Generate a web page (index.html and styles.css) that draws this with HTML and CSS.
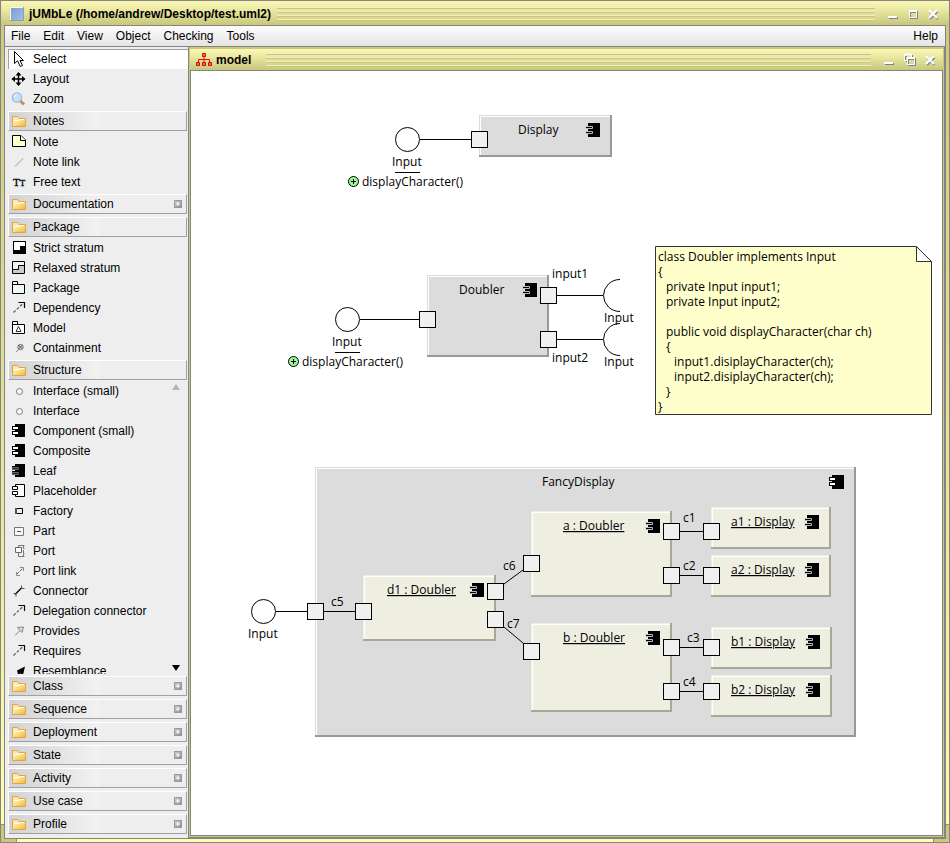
FILE: index.html
```html
<!DOCTYPE html>
<html lang="en">
<head>
<meta charset="utf-8">
<title>jUMbLe</title>
<link rel="stylesheet" href="styles.css">
</head>
<body>
<svg class="sprite" aria-hidden="true">
  <defs>
    <linearGradient id="g-folder" x1="0" y1="0" x2="1" y2="1"><stop offset="0" stop-color="#fff6c4"/><stop offset="1" stop-color="#f3bd2e"/></linearGradient>
    <linearGradient id="g-app" x1="0" y1="0" x2="1" y2="1"><stop offset="0" stop-color="#7a9bd4"/><stop offset="1" stop-color="#a4bee8"/></linearGradient>
    <linearGradient id="g-plus" x1="0" y1="0" x2="1" y2="1"><stop offset="0" stop-color="#d4d4d4"/><stop offset="1" stop-color="#8a8a8a"/></linearGradient>
  </defs>
  <symbol id="i-cursor" viewBox="0 0 16 16"><path d="M3.5 .5V12.5L6.5 9.8L9.3 15.5L11.5 14.5L9 9.5H12.5Z" fill="#fff" stroke="#000"/></symbol>
  <symbol id="i-move" viewBox="0 0 16 16"><path d="M7.5 2V14M1.500 8H13.500" stroke="#000" stroke-width="1.500"/><path d="M7.500 1L10.500 4.500H4.500ZM7.500 15L4.500 11.500H10.500ZM.5 8L4 5V11ZM14.500 8L11 5V11Z"/></symbol>
  <symbol id="i-zoom" viewBox="0 0 16 16"><path d="M9 9.500L13 13.500" stroke="#c98f52" stroke-width="3"/><circle cx="6" cy="6.500" r="4.600" fill="#c6e0fa" stroke="#9dbbe4" stroke-width="1.400"/><path d="M3.500 6A3 3 0 0 1 6 3.500" stroke="#fff" fill="none"/></symbol>
  <symbol id="i-folder" viewBox="0 0 16 16"><path d="M1.500 13.500V3.500H6.500L8 5.500H14.500V13.500Z" fill="#ffe9a6" stroke="#e0a24a"/><path d="M3 13V8H8L9.500 6.500H14V13Z" fill="url(#g-folder)"/><path d="M3 7.500H8L9.500 6.500H13" stroke="#fff" fill="none"/></symbol>
  <symbol id="i-note" viewBox="0 0 16 16"><path d="M1.500 1.500H10L14.500 6V12.500H1.500Z" fill="#ffffcc" stroke="#000"/><path d="M9.500 1.500V6.500H14.500" fill="#fff" stroke="#000"/></symbol>
  <symbol id="i-notelink" viewBox="0 0 16 16"><path d="M4 12.500L12 4.500" stroke="#999"/></symbol>
  <symbol id="i-strict" viewBox="0 0 16 16"><path d="M2 1H15V14H2Z"/><path d="M3 2H14V6H9V10H3Z" fill="#fff"/></symbol>
  <symbol id="i-relaxed" viewBox="0 0 16 16"><path d="M1.500 1.500H13.500V13.500H1.500Z" fill="#f4f4f4" stroke="#000"/><path d="M2 9.500H7.500V5.500H13V13H2Z" fill="#ccc"/><path d="M2 9.500H7.500V5.500H13" fill="none" stroke="#000"/></symbol>
  <symbol id="i-package" viewBox="0 0 16 16"><path d="M1.500 4.500H13.500V13.500H1.500ZM1.500 1.500H6.500V4.500H1.500Z" fill="#eef8ff" stroke="#000"/></symbol>
  <symbol id="i-model" viewBox="0 0 16 16"><path d="M1.500 4.500H13.500V13.500H1.500ZM1.500 1.500H6.500V4.500H1.500Z" fill="#fff" stroke="#000"/><path d="M5 11.500L7.500 6.500L10 11.500Z" fill="none" stroke="#333"/></symbol>
  <symbol id="i-dependency" viewBox="0 0 16 16"><path d="M2.500 12.500L12 3.500" stroke="#555" stroke-width="1.200" stroke-dasharray="3 1.500"/><path d="M7.500 2.500H13.500V8" fill="none" stroke="#000" stroke-width="1.200"/></symbol>
  <symbol id="i-containment" viewBox="0 0 16 16"><path d="M5 12L8 9" stroke="#888"/><circle cx="9.500" cy="7" r="2.700" fill="#ddd" stroke="#777"/><path d="M7.500 5L11.500 9M11.500 5L7.500 9" stroke="#555"/></symbol>
  <symbol id="i-circle" viewBox="0 0 16 16"><circle cx="8.500" cy="8.500" r="3" fill="#fafafa" stroke="#777"/></symbol>
  <symbol id="i-component" viewBox="0 0 16 16"><path d="M4 1H14V14H4V12H1V8H4V7H1V3H4Z"/><path d="M2 4H7V6H2ZM2 9H7V11H2Z" fill="#fff"/></symbol>
  <symbol id="i-leaf" viewBox="0 0 16 16"><path d="M4 1H14V14H4V12H1V8H4V7H1V3H4Z"/><path d="M1.500 4.500H7.500V6.500H1.500ZM1.500 9.500H7.500V11.500H1.500Z" fill="#222" stroke="#666"/></symbol>
  <symbol id="i-placeholder" viewBox="0 0 16 16"><path d="M4.500 4V1.500H13.500V13.500H4.500V11" fill="#fff" stroke="#000"/><path d="M4.500 4V11" stroke="#fff"/><path d="M1.500 3.500H6.500V6.500H1.500ZM1.500 8.500H6.500V11.500H1.500Z" fill="#fff" stroke="#000"/></symbol>
  <symbol id="i-factory" viewBox="0 0 16 16"><path d="M5 5.500H11.500V10.500H5Z" fill="#eee" stroke="#000"/><path d="M5 5V11" stroke="#555" stroke-width="2"/></symbol>
  <symbol id="i-part" viewBox="0 0 16 16"><path d="M3.500 4.500H12.500V12.500H3.500Z" fill="#f8f8f8" stroke="#777"/><path d="M6 8.500H10" stroke="#555"/></symbol>
  <symbol id="i-port" viewBox="0 0 16 16"><path d="M7.500 4.500V2.500H13.500M12.500 3V5.500H13.500M12.500 7V10M7.500 10V13.500H13.500M12.500 13V10.500H13.500" fill="none" stroke="#777"/><path d="M4.500 4.500H10.500V9.500H4.500Z" fill="#fff" stroke="#666"/></symbol>
  <symbol id="i-portlink" viewBox="0 0 16 16"><path d="M5 12L12 5" stroke="#666" stroke-dasharray="4 1"/><path d="M9 4.500H12.500V8M5.500 9V12.500H9" fill="none" stroke="#888"/></symbol>
  <symbol id="i-connector" viewBox="0 0 16 16"><path d="M4 11.500L11 4.500" stroke="#000" stroke-width="1.200"/><path d="M10.500 2.500V5.500H13.500M2.500 10.500H5V13.500" fill="none" stroke="#555"/></symbol>
  <symbol id="i-provides" viewBox="0 0 16 16"><path d="M4 12.500L9 7.500" stroke="#888"/><path d="M6.500 4.500L12.500 4L11 9.500L9 7.500Z" fill="#ddd" stroke="#888"/></symbol>
  <symbol id="i-resemblance" viewBox="0 0 16 16"><path d="M5 14L9 9" stroke="#000" stroke-width="1.500"/><path d="M14 3.500L12 12L9.500 10.500L7 11L6 7.500Z"/></symbol>
  <symbol id="i-plus" viewBox="0 0 8 8"><rect x=".5" y=".5" width="7" height="7" fill="url(#g-plus)" stroke="#999"/><path d="M4 2V6M2 4H6" stroke="#fff"/></symbol>
  <symbol id="w-min" viewBox="0 0 12 12"><path d="M2 9H11V11H2Z" fill="#75809a"/><path d="M1 8H10V10H1Z" fill="#fff"/></symbol>
  <symbol id="w-max" viewBox="0 0 12 12"><path d="M3 10.500H10.500V3" fill="none" stroke="#75809a"/><path d="M2 3H9.500M2.500 3V9.500H9.500V2" fill="none" stroke="#fff"/><path d="M2 2H10V4H2Z" fill="#fff"/><path d="M3.500 9V4.500H9" fill="none" stroke="#75809a"/></symbol>
  <symbol id="w-restore" viewBox="0 0 13 13"><path d="M2.500 8V3.500H4M3 8.500H4M9.500 2V4" fill="none" stroke="#75809a"/><path d="M1.500 8V.5M1 1H9M1 7.500H4M8.500 1V4" fill="none" stroke="#fff"/><path d="M1 1H9V2H1Z" fill="#fff"/><path d="M5 12.500H12.500V5M5.500 11V6.500H11" fill="none" stroke="#75809a"/><path d="M4.500 5V11.500H11.500V5" fill="none" stroke="#fff"/><path d="M4 4H12V6H4Z" fill="#fff"/></symbol>
  <symbol id="w-close" viewBox="0 0 12 12"><path d="M3 3.500L10.500 11M10.500 3.500L3 11" stroke="#75809a" stroke-width="2"/><path d="M2 2L10 10M10 2L2 10" stroke="#fff" stroke-width="2.200"/></symbol>
  <symbol id="c-leaf" viewBox="0 0 15 14"><path d="M3 0H15V14H3Z"/><path d="M.5 3.500H7.500V5.500H.5M.5 8.500H7.500V10.500H.5" fill="none" stroke="#bbb"/><path d="M1 4H6V5H1ZM1 9H6V10H1Z"/></symbol>
  <symbol id="c-comp" viewBox="0 0 15 14"><path d="M3 0H15V14H3V11H0V7H3V6H0V2H3Z"/><path d="M1 3H6V5H1ZM1 8H6V10H1Z" fill="#fff"/></symbol>
</svg>

<div class="window">
  <header class="titlebar">
    <svg class="app-icon" viewBox="0 0 14 14" aria-hidden="true"><rect x=".5" y=".5" width="13" height="13" fill="url(#g-app)" stroke="#f4f6fa"/><path d="M0 13.500H13.500V0" fill="none" stroke="#8c9cbc"/></svg>
    <h1 class="title">jUMbLe (/home/andrew/Desktop/test.uml2)</h1>
    <span class="bumps"></span>
    <div class="win-buttons">
      <button aria-label="Minimize"><svg><use href="#w-min"/></svg></button>
      <button aria-label="Maximize"><svg><use href="#w-max"/></svg></button>
      <button aria-label="Close"><svg><use href="#w-close"/></svg></button>
    </div>
  </header>

  <div class="frame">
    <nav class="menubar">
      <button>File</button><button>Edit</button><button>View</button><button>Object</button><button>Checking</button><button>Tools</button><button class="help">Help</button>
    </nav>

    <div class="work">
      <aside class="palette">
        <ul class="tools">
          <li><button class="tool selected"><svg><use href="#i-cursor"/></svg>Select</button></li>
          <li><button class="tool"><svg><use href="#i-move"/></svg>Layout</button></li>
          <li><button class="tool"><svg><use href="#i-zoom"/></svg>Zoom</button></li>
        </ul>
        <button class="group"><svg><use href="#i-folder"/></svg>Notes</button>
        <ul class="tools">
          <li><button class="tool"><svg><use href="#i-note"/></svg>Note</button></li>
          <li><button class="tool"><svg><use href="#i-notelink"/></svg>Note link</button></li>
          <li><button class="tool"><span class="tt" aria-hidden="true">T<small>T</small></span>Free text</button></li>
        </ul>
        <button class="group"><svg><use href="#i-folder"/></svg>Documentation<svg class="plus"><use href="#i-plus"/></svg></button>
        <button class="group"><svg><use href="#i-folder"/></svg>Package</button>
        <ul class="tools">
          <li><button class="tool"><svg><use href="#i-strict"/></svg>Strict stratum</button></li>
          <li><button class="tool"><svg><use href="#i-relaxed"/></svg>Relaxed stratum</button></li>
          <li><button class="tool"><svg><use href="#i-package"/></svg>Package</button></li>
          <li><button class="tool"><svg><use href="#i-dependency"/></svg>Dependency</button></li>
          <li><button class="tool"><svg><use href="#i-model"/></svg>Model</button></li>
          <li><button class="tool"><svg><use href="#i-containment"/></svg>Containment</button></li>
        </ul>
        <button class="group"><svg><use href="#i-folder"/></svg>Structure</button>
        <div class="scroller">
          <ul class="tools">
            <li><button class="tool"><svg><use href="#i-circle"/></svg>Interface (small)</button></li>
            <li><button class="tool"><svg><use href="#i-circle"/></svg>Interface</button></li>
            <li><button class="tool"><svg><use href="#i-component"/></svg>Component (small)</button></li>
            <li><button class="tool"><svg><use href="#i-component"/></svg>Composite</button></li>
            <li><button class="tool"><svg><use href="#i-leaf"/></svg>Leaf</button></li>
            <li><button class="tool"><svg><use href="#i-placeholder"/></svg>Placeholder</button></li>
            <li><button class="tool"><svg><use href="#i-factory"/></svg>Factory</button></li>
            <li><button class="tool"><svg><use href="#i-part"/></svg>Part</button></li>
            <li><button class="tool"><svg><use href="#i-port"/></svg>Port</button></li>
            <li><button class="tool"><svg><use href="#i-portlink"/></svg>Port link</button></li>
            <li><button class="tool"><svg><use href="#i-connector"/></svg>Connector</button></li>
            <li><button class="tool"><svg><use href="#i-dependency"/></svg>Delegation connector</button></li>
            <li><button class="tool"><svg><use href="#i-provides"/></svg>Provides</button></li>
            <li><button class="tool"><svg><use href="#i-dependency"/></svg>Requires</button></li>
            <li><button class="tool"><svg><use href="#i-resemblance"/></svg>Resemblance</button></li>
          </ul>
          <button class="scroll up" aria-label="Scroll up"></button>
          <button class="scroll down" aria-label="Scroll down"></button>
        </div>
        <button class="group"><svg><use href="#i-folder"/></svg>Class<svg class="plus"><use href="#i-plus"/></svg></button>
        <button class="group"><svg><use href="#i-folder"/></svg>Sequence<svg class="plus"><use href="#i-plus"/></svg></button>
        <button class="group"><svg><use href="#i-folder"/></svg>Deployment<svg class="plus"><use href="#i-plus"/></svg></button>
        <button class="group"><svg><use href="#i-folder"/></svg>State<svg class="plus"><use href="#i-plus"/></svg></button>
        <button class="group"><svg><use href="#i-folder"/></svg>Activity<svg class="plus"><use href="#i-plus"/></svg></button>
        <button class="group"><svg><use href="#i-folder"/></svg>Use case<svg class="plus"><use href="#i-plus"/></svg></button>
        <button class="group"><svg><use href="#i-folder"/></svg>Profile<svg class="plus"><use href="#i-plus"/></svg></button>
      </aside>

      <section class="doc">
        <header class="doc-title">
          <svg class="doc-icon" viewBox="0 0 16 13" aria-hidden="true"><path d="M8 4V9M2.500 9V6.500H13.500V9" fill="none" stroke="#e01010"/><path d="M6.500 .5H9.500V3.500H6.500ZM.5 9.500H3.500V12.500H.5ZM6.500 9.500H9.500V12.500H6.500ZM12.500 9.500H15.500V12.500H12.500Z" fill="#b08a60" stroke="#f00000"/></svg>
          <h2 class="title">model</h2>
          <span class="bumps"></span>
          <div class="win-buttons">
            <button aria-label="Minimize diagram"><svg><use href="#w-min"/></svg></button>
            <button aria-label="Restore diagram"><svg class="restore"><use href="#w-restore"/></svg></button>
            <button aria-label="Close diagram"><svg><use href="#w-close"/></svg></button>
          </div>
        </header>
        <main class="canvas">
          <svg class="diagram" viewBox="191 71 751 764" width="751" height="764">
            <g class="node">
              <rect x="479" y="115" width="133" height="42"/><path class="hi" d="M480.500 155V116.500H610"/><path class="shade" d="M479 156H611V115"/>
              <rect x="427" y="275" width="122" height="82"/><path class="hi" d="M428.500 355V276.500H547"/><path class="shade" d="M427 356H548V275"/>
              <rect x="315" y="467" width="541" height="270"/><path class="hi" d="M316.500 735V468.500H854"/><path class="shade" d="M315 736H855V467"/>
            </g>
            <g class="node part">
              <rect x="363" y="575" width="133" height="66"/><path class="hi" d="M364.500 639V576.500H494"/><path class="shade" d="M363 640H495V575"/>
              <rect x="531" y="511" width="141" height="86"/><path class="hi" d="M532.500 595V512.500H670"/><path class="shade" d="M531 596H671V511"/>
              <rect x="531" y="623" width="141" height="89"/><path class="hi" d="M532.500 710V624.500H670"/><path class="shade" d="M531 711H671V623"/>
              <rect x="711" y="507" width="120" height="42"/><path class="hi" d="M712.500 547V508.500H829"/><path class="shade" d="M711 548H830V507"/>
              <rect x="711" y="555" width="120" height="42"/><path class="hi" d="M712.500 595V556.500H829"/><path class="shade" d="M711 596H830V555"/>
              <rect x="711" y="627" width="121" height="42"/><path class="hi" d="M712.500 667V628.500H830"/><path class="shade" d="M711 668H831V627"/>
              <rect x="711" y="675" width="121" height="42"/><path class="hi" d="M712.500 715V676.500H830"/><path class="shade" d="M711 716H831V675"/>
            </g>
            <g class="wire">
              <path d="M420 139.500H471M360 319.500H419M557 295.500H603M557 339.500H603M276 611.500H307M324 611.500H355M504 584L523 570M504 627L523 643M680 531.500H703M680 575.500H703M680 647.500H703M680 691.500H703M395 172.500H420M335 352.500H360"/>
              <path d="M620 279.500A16.500 16 0 0 0 620 311.500M620 323.500A16.500 16 0 0 0 620 355.500"/>
              <circle cx="407.500" cy="139.500" r="12"/><circle cx="347.500" cy="319.500" r="12"/><circle cx="263.500" cy="611.500" r="12"/>
            </g>
            <g class="port">
              <rect x="471.500" y="131.500" width="16" height="16"/><rect x="419.500" y="311.500" width="16" height="16"/><rect x="540.500" y="287.500" width="16" height="16"/><rect x="540.500" y="331.500" width="16" height="16"/>
              <rect x="307.500" y="603.500" width="16" height="16"/><rect x="355.500" y="603.500" width="16" height="16"/><rect x="487.500" y="583.500" width="16" height="16"/><rect x="487.500" y="611.500" width="16" height="16"/>
              <rect x="523.500" y="555.500" width="16" height="16"/><rect x="523.500" y="643.500" width="16" height="16"/>
              <rect x="663.500" y="523.500" width="16" height="16"/><rect x="663.500" y="567.500" width="16" height="16"/><rect x="663.500" y="639.500" width="16" height="16"/><rect x="663.500" y="683.500" width="16" height="16"/>
              <rect x="703.500" y="523.500" width="16" height="16"/><rect x="703.500" y="567.500" width="16" height="16"/><rect x="703.500" y="639.500" width="16" height="16"/><rect x="703.500" y="683.500" width="16" height="16"/>
            </g>
            <g class="public">
              <circle cx="353.500" cy="181.500" r="5"/><path d="M351 181.500H356M353.500 179V184"/>
              <circle cx="293.500" cy="361.500" r="5"/><path d="M291 361.500H296M293.500 359V364"/>
            </g>
            <g>
              <use href="#c-leaf" x="585" y="123" width="15" height="14"/><use href="#c-leaf" x="522" y="283" width="15" height="14"/>
              <use href="#c-leaf" x="469" y="583" width="15" height="14"/><use href="#c-leaf" x="645" y="519" width="15" height="14"/><use href="#c-leaf" x="645" y="631" width="15" height="14"/>
              <use href="#c-leaf" x="804" y="515" width="15" height="14"/><use href="#c-leaf" x="804" y="563" width="15" height="14"/><use href="#c-leaf" x="805" y="635" width="15" height="14"/><use href="#c-leaf" x="805" y="683" width="15" height="14"/>
              <use href="#c-comp" x="829" y="475" width="15" height="14"/>
            </g>
            <g class="note"><path d="M655.500 246.500H916.500L931.500 261.500V414.500H655.500Z"/><path class="fold" d="M916.500 246.500V261.500H931.500Z"/></g>
            <g class="label">
              <text x="518" y="134">Display</text><text x="392" y="166">Input</text><text x="362" y="186">displayCharacter()</text>
              <text x="459" y="294">Doubler</text><text x="332" y="346">Input</text><text x="302" y="366">displayCharacter()</text>
              <text x="552" y="278">input1</text><text x="552" y="362">input2</text><text x="604" y="322">Input</text><text x="604" y="366">Input</text>
              <text x="542" y="486">FancyDisplay</text><text x="248" y="638">Input</text>
              <text x="683" y="522">c1</text><text x="683" y="570">c2</text><text x="687" y="642">c3</text><text x="683" y="686">c4</text><text x="331" y="606">c5</text><text x="503" y="570">c6</text><text x="507" y="628">c7</text>
              <g class="typed">
                <text x="387" y="594">d1 : Doubler</text><text x="563" y="530">a : Doubler</text><text x="563" y="642">b : Doubler</text>
                <text x="731" y="526">a1 : Display</text><text x="731" y="574">a2 : Display</text><text x="731" y="646">b1 : Display</text><text x="731" y="694">b2 : Display</text>
              </g>
              <text x="658" y="261">class Doubler implements Input</text>
              <text x="658" y="276">{</text>
              <text x="666" y="291">private Input input1;</text>
              <text x="666" y="306">private Input input2;</text>
              <text x="666" y="336">public void displayCharacter(char ch)</text>
              <text x="666" y="351">{</text>
              <text x="674" y="366">input1.disiplayCharacter(ch);</text>
              <text x="674" y="381">input2.disiplayCharacter(ch);</text>
              <text x="666" y="396">}</text>
              <text x="658" y="411">}</text>
            </g>
          </svg>
        </main>
      </section>
    </div>
  </div>
  <span class="grip left"></span>
  <span class="grip right"></span>
</div>
</body>
</html>
```
FILE: styles.css
```css
* { box-sizing: border-box; }
html, body { height: 100%; }
body { margin: 0; font: 12px/16px "Liberation Sans", Arial, sans-serif; color: #000; }
button { font: inherit; color: inherit; border: 0; padding: 0; background: none; display: flex; align-items: center; }
ul { list-style: none; margin: 0; padding: 0; }
.sprite { position: absolute; width: 0; height: 0; }

.window {
  position: relative;
  display: flex;
  flex-direction: column;
  height: 100vh;
  border: 1px solid #848484;
  background: linear-gradient(#c9c87b, #fdfdb4);
}
.titlebar, .doc-title {
  display: flex;
  align-items: center;
  background: linear-gradient(#fbf8b4, #eeeba6 30%, #c9c77a);
}
.titlebar { height: 24px; padding: 2px 10px 0 9px; }
.title { margin: 0; font-size: 12px; font-weight: bold; white-space: nowrap; }
.app-icon { width: 14px; height: 14px; margin-right: 5px; }
.bumps {
  flex: 1;
  height: 14px;
  margin: 0 12px 0 6px;
  background: repeating-linear-gradient(#f2efc0 0 1px, #c9c680 1px 2px, transparent 2px 4px);
}
.win-buttons { display: flex; gap: 8px; }
.win-buttons svg { display: block; width: 12px; height: 12px; }
.win-buttons .restore { width: 13px; height: 13px; }

.frame {
  position: relative;
  z-index: 1;
  flex: 1;
  min-height: 0;
  display: flex;
  flex-direction: column;
  margin: 0 3px 3px;
  border: 1px solid #848484;
  background: #eee;
}
.menubar {
  display: flex;
  gap: 13px;
  height: 21px;
  padding: 0 7px 0 6px;
  border-bottom: 1px solid #848484;
  background: linear-gradient(#fdfdfd, #e4e4e4);
}
.menubar .help { margin-left: auto; }

.work { flex: 1; min-height: 0; display: flex; }
.palette {
  display: flex;
  flex-direction: column;
  width: 183px;
  padding: 2px 0 3px 3px;
}
.tool { width: 100%; height: 20px; padding-left: 3px; gap: 6px; }
.tool svg, .group svg { flex: none; width: 16px; height: 16px; }
.tool.selected {
  background: #fff;
  box-shadow: inset 1px 1px #a0a0a0;
}
.group {
  flex: none;
  height: 20px;
  margin: 2px 1px 1px 0;
  padding: 0 4px 0 2px;
  gap: 6px;
  border: 1px solid #fff;
  border-right-color: #a0a0a0;
  border-bottom-color: #a0a0a0;
  background: linear-gradient(90deg, #d2d2d2, #f2f2f2 90px, #eee 91px);
}
.group .plus { width: 8px; height: 8px; margin-left: auto; }
.scroller { position: relative; flex: 1; min-height: 0; overflow: hidden; }
.scroll { position: absolute; right: 8px; border: 4px solid transparent; }
.scroll.up { top: 3px; border-top: 0; border-bottom: 6px solid #b4b4b4; }
.scroll.down { bottom: 3px; border-bottom: 0; border-top: 6px solid #000; }
.tt { width: 16px; padding-left: 2px; text-align: left; white-space: nowrap; font: 11px/16px "Liberation Serif", serif; -webkit-text-stroke: 0.3px #000; }
.tt small { font-size: 9px; }

.doc {
  flex: 1;
  min-width: 0;
  display: flex;
  flex-direction: column;
  border: 1px solid #848484;
  border-top: 0;
  background: #c9c87b;
  padding: 2px 1px 1px;
}
.doc-title { height: 21px; padding: 0 7px 0 6px; }
.doc-icon { width: 16px; height: 13px; margin-right: 4px; }
.doc-title .bumps { margin-left: 15px; }
.doc-title .win-buttons { gap: 8px; }
.canvas {
  flex: 1;
  min-height: 0;
  overflow: hidden;
  border: 1px solid #848484;
  background: #fff;
}
.diagram { display: block; }
.node rect { fill: #dcdcdc; }
.node path { fill: none; }
.hi { stroke: #fff; }
.shade { stroke: #999; stroke-width: 2px; }
.part rect { fill: #eeefe0; }
.part .shade { stroke: #a7a898; }
.wire { fill: none; stroke: #000; }
.port rect { fill: #f0f0f0; stroke: #000; }
.public { fill: #98f898; stroke: #000; }
.note { fill: #ffffcc; stroke: #333; }
.note .fold { fill: #fff; }
.label { font: 12px "Open Sans", "DejaVu Sans", sans-serif; }
.typed { text-decoration: underline; }

.grip {
  position: absolute;
  bottom: 0;
  width: 16px;
  height: 18px;
  background: #c9c87b;
  border-top: 1px solid #96955c;
}
.grip.left { left: 0; border-right: 1px solid #96955c; }
.grip.right { right: 0; border-left: 1px solid #96955c; }
```
